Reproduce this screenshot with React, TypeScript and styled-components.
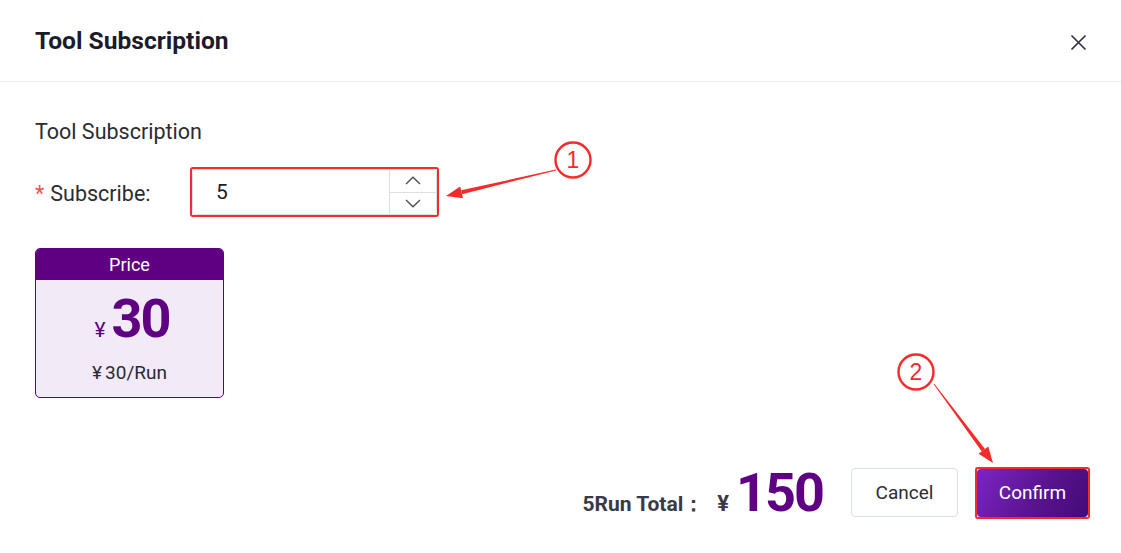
import React, { useState } from 'react';
import styled, { createGlobalStyle } from 'styled-components';

const GlobalStyle = createGlobalStyle`
  body {
    margin: 0;
    background: #ffffff;
    font-family: Roboto, "Liberation Sans", Arial, sans-serif;
  }
`;

const PURPLE = '#5f0083';

const Dialog = styled.div`
  position: relative;
  width: 1121px;
  height: 553px;
  display: flex;
  flex-direction: column;
  background: #fff;
  overflow: hidden;
`;

const Header = styled.div`
  height: 82px;
  box-sizing: border-box;
  padding: 0 33px 0 35px;
  display: flex;
  align-items: center;
  justify-content: space-between;
  border-bottom: 1px solid #ebebeb;
`;

const Title = styled.div`
  font-size: 24.6px;
  font-weight: 700;
  color: #1d1b2b;
`;

const CloseButton = styled.button`
  border: 0;
  background: transparent;
  padding: 0;
  width: 20px;
  height: 20px;
  display: flex;
  align-items: center;
  justify-content: center;
  margin-top: 4px;
  cursor: pointer;
`;

const Body = styled.div`
  flex: 1;
  padding: 37px 35px 0;
`;

const SectionLabel = styled.div`
  font-size: 21.5px;
  line-height: 26px;
  color: #2b2b33;
`;

const FormRow = styled.div`
  display: flex;
  align-items: center;
  margin-top: 24px;
`;

const FieldLabel = styled.label`
  width: 157px;
  font-size: 21.5px;
  color: #2b2b33;
  padding-top: 3px;
  &::before {
    content: '*';
    color: #f2514f;
    margin-right: 6px;
  }
`;

const InputWrap = styled.div`
  position: relative;
  width: 245px;
  height: 46px;
  box-sizing: border-box;
  border: 1px solid #dcdfe6;
  border-radius: 4px;
  display: flex;
`;

const NumberField = styled.input`
  flex: 1;
  min-width: 0;
  border: 0;
  outline: none;
  background: transparent;
  padding: 0 0 0 23px;
  font-family: inherit;
  font-size: 21px;
  color: #1d1b2b;
`;

const Spinner = styled.div`
  width: 46px;
  display: flex;
  flex-direction: column;
  border-left: 1px solid #dcdfe6;
`;

const SpinButton = styled.button<{ $top?: boolean }>`
  flex: 1;
  border: 0;
  padding: 0;
  background: #fff;
  display: flex;
  align-items: center;
  justify-content: center;
  border-bottom: ${(p) => (p.$top ? '1px solid #dcdfe6' : '0')};
  cursor: pointer;
`;

const MarkBox = styled.div<{ $inset?: number }>`
  position: absolute;
  inset: ${(p) => (p.$inset ?? -3)}px;
  border: 2px solid #f52a2a;
  border-radius: 3px;
  pointer-events: none;
`;

const PriceCard = styled.div`
  margin-top: 33px;
  width: 189px;
  height: 150px;
  box-sizing: border-box;
  border: 1px solid ${PURPLE};
  border-radius: 5px;
  overflow: hidden;
  background: #f2eaf6;
  display: flex;
  flex-direction: column;
`;

const CardHead = styled.div`
  height: 31px;
  background: ${PURPLE};
  color: #fff;
  font-size: 18px;
  display: flex;
  align-items: center;
  justify-content: center;
`;

const CardPrice = styled.div`
  display: flex;
  align-items: baseline;
  justify-content: center;
  color: ${PURPLE};
  margin-top: 7px;
  height: 62px;
  padding-left: 5px;
`;

const Yen = styled.span<{ $size: number; $color?: string; $bold?: boolean; $gap?: number }>`
  font-size: ${(p) => p.$size}px;
  color: ${(p) => p.$color || 'inherit'};
  font-weight: ${(p) => (p.$bold ? 700 : 400)};
  margin-right: ${(p) => p.$gap ?? 6}px;
`;

const BigNumber = styled.span<{ $size: number }>`
  font-size: ${(p) => p.$size}px;
  font-weight: 700;
  color: ${PURPLE};
  letter-spacing: -2px;
`;

const UnitPrice = styled.div`
  text-align: center;
  font-size: 19px;
  color: #2b2b33;
  margin-top: 12px;
`;

const Footer = styled.div`
  display: flex;
  align-items: center;
  justify-content: flex-end;
  padding: 0 33px 29px 0;
`;

const TotalGroup = styled.div`
  display: flex;
  align-items: baseline;
  margin-right: 28px;
`;

const TotalLabel = styled.span`
  font-size: 21px;
  font-weight: 700;
  color: #3a3a44;
  margin-right: 13px;
`;

const Button = styled.button<{ $primary?: boolean }>`
  position: relative;
  height: ${(p) => (p.$primary ? 48 : 49)}px;
  width: ${(p) => (p.$primary ? 111 : 107)}px;
  box-sizing: border-box;
  border-radius: 4px;
  font-family: inherit;
  font-size: 19px;
  cursor: pointer;
  border: ${(p) => (p.$primary ? '0' : '1px solid #dcdfe6')};
  color: ${(p) => (p.$primary ? '#fff' : '#2b2b33')};
  background: ${(p) =>
    p.$primary ? 'linear-gradient(120deg, #7d24c4 0%, #5a148f 55%, #440a78 100%)' : '#fff'};
  & + & {
    margin-left: 19px;
  }
`;

const Overlay = styled.svg`
  position: absolute;
  left: 0;
  top: 0;
  pointer-events: none;
`;

const Arrow: React.FC<{ x1: number; y1: number; x2: number; y2: number }> = ({ x1, y1, x2, y2 }) => {
  const a = Math.atan2(y2 - y1, x2 - x1);
  const len = 16;
  const half = 6;
  const bx = x2 - len * Math.cos(a);
  const by = y2 - len * Math.sin(a);
  const nx = -Math.sin(a);
  const ny = Math.cos(a);
  const shaft = [
    `${x1 + nx * 0.4},${y1 + ny * 0.4}`,
    `${bx + nx * 2},${by + ny * 2}`,
    `${bx - nx * 2},${by - ny * 2}`,
    `${x1 - nx * 0.4},${y1 - ny * 0.4}`,
  ].join(' ');
  const head = [
    `${x2},${y2}`,
    `${bx + nx * half},${by + ny * half}`,
    `${bx - nx * half},${by - ny * half}`,
  ].join(' ');
  return (
    <g fill="#f52a2a">
      <polygon points={shaft} />
      <polygon points={head} />
    </g>
  );
};

const Badge: React.FC<{ cx: number; cy: number; n: string }> = ({ cx, cy, n }) => (
  <g>
    <circle cx={cx} cy={cy} r={17.5} fill="#fff" stroke="#f52a2a" strokeWidth={2.4} />
    <text
      x={cx}
      y={cy + 8}
      textAnchor="middle"
      fontSize={23}
      fontFamily="'Liberation Sans', Arial, sans-serif"
      fill="#f52a2a"
    >
      {n}
    </text>
  </g>
);

export default function App() {
  const [count, setCount] = useState(5);
  const unit = 30;

  return (
    <>
      <GlobalStyle />
      <Dialog>
        <Header>
          <Title>Tool Subscription</Title>
          <CloseButton aria-label="close">
            <svg width="17" height="17" viewBox="0 0 17 17">
              <path d="M1.5 1.5L15.5 15.5M15.5 1.5L1.5 15.5" stroke="#2e2c3d" strokeWidth="1.6" />
            </svg>
          </CloseButton>
        </Header>

        <Body>
          <SectionLabel>Tool Subscription</SectionLabel>
          <FormRow>
            <FieldLabel>Subscribe:</FieldLabel>
            <InputWrap>
              <NumberField value={count} onChange={(e) => setCount(Number(e.target.value) || 0)} />
              <Spinner>
                <SpinButton $top onClick={() => setCount(count + 1)}>
                  <svg width="16" height="9" viewBox="0 0 16 9">
                    <path d="M1 8L8 1.2L15 8" fill="none" stroke="#4a4a55" strokeWidth="1.3" />
                  </svg>
                </SpinButton>
                <SpinButton onClick={() => setCount(Math.max(1, count - 1))}>
                  <svg width="16" height="9" viewBox="0 0 16 9">
                    <path d="M1 1L8 7.8L15 1" fill="none" stroke="#4a4a55" strokeWidth="1.3" />
                  </svg>
                </SpinButton>
              </Spinner>
              <MarkBox />
            </InputWrap>
          </FormRow>

          <PriceCard>
            <CardHead>Price</CardHead>
            <CardPrice>
              <Yen $size={21}>¥</Yen>
              <BigNumber $size={54}>{unit}</BigNumber>
            </CardPrice>
            <UnitPrice>
              <Yen $size={19} $gap={3}>
                ¥
              </Yen>
              {unit}/Run
            </UnitPrice>
          </PriceCard>
        </Body>

        <Footer>
          <TotalGroup>
            <TotalLabel>{count}Run Total：</TotalLabel>
            <Yen $size={22} $color="#3a3a44" $bold $gap={7}>
              ¥
            </Yen>
            <BigNumber $size={54}>{count * unit}</BigNumber>
          </TotalGroup>
          <Button>Cancel</Button>
          <Button $primary>
            Confirm
            <MarkBox $inset={-2} />
          </Button>
        </Footer>

        <Overlay width="1121" height="553">
          <Arrow x1={556} y1={170} x2={446} y2={196} />
          <Badge cx={573} cy={160} n="1" />
          <Arrow x1={934} y1={384} x2={993} y2={463} />
          <Badge cx={916} cy={372} n="2" />
        </Overlay>
      </Dialog>
    </>
  );
}
